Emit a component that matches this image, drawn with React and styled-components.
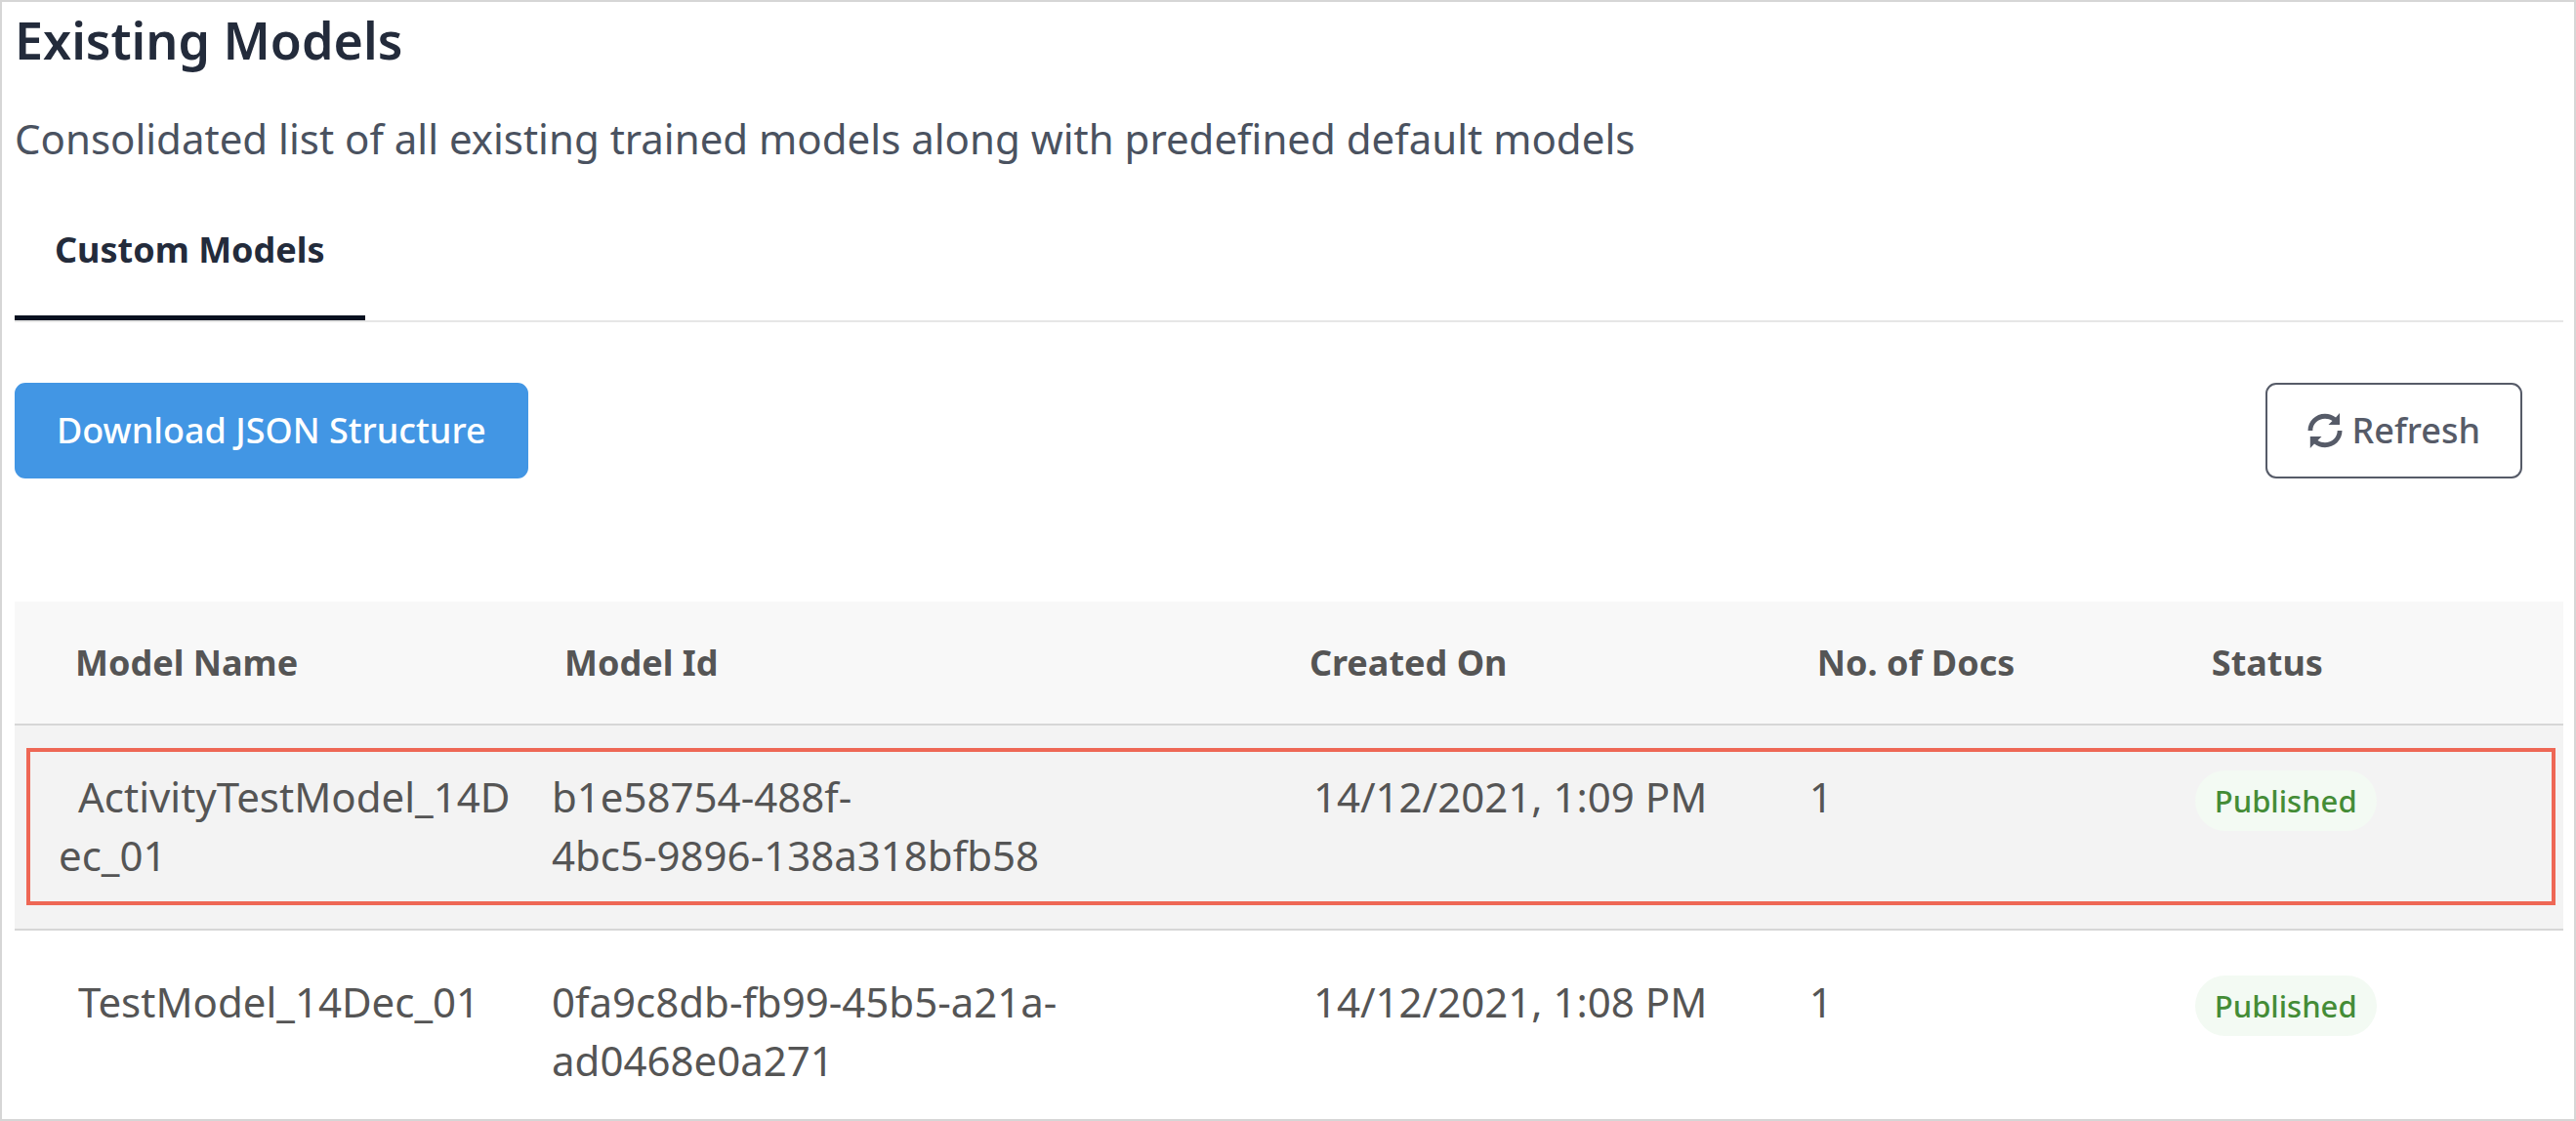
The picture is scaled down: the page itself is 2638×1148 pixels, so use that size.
import React from "react";
import styled, { createGlobalStyle } from "styled-components";

const GlobalStyle = createGlobalStyle`
  *, *::before, *::after { box-sizing: border-box; }
  body { margin: 0; background: #ffffff; font-family: "Noto Sans", sans-serif; }
`;

const Page = styled.main`
  min-height: 100vh;
  border: 2px solid #d6d6d6;
  padding: 4px 11px 0 13px;
`;

const Title = styled.h1`
  margin: 0 0 36px;
  font-size: 52px;
  line-height: 70px;
  font-weight: 600;
  color: #232b3b;
`;

const Subtitle = styled.p`
  margin: 0 0 16px;
  font-size: 42px;
  line-height: 60px;
  color: #4a5260;
`;

const TabList = styled.div`
  display: flex;
  border-bottom: 2px solid #e6e6e6;
`;

const Tab = styled.button`
  border: 0;
  border-bottom: 5px solid #081120;
  background: transparent;
  padding: 43px 41px 42px;
  font: inherit;
  font-size: 36px;
  line-height: 50px;
  font-weight: 700;
  color: #232b3b;
`;

const Toolbar = styled.div`
  display: flex;
  justify-content: space-between;
  padding: 62px 42px 126px 0;
`;

const Button = styled.button`
  display: flex;
  align-items: center;
  gap: 9px;
  border: 2px solid ${(p) => (p.$primary ? "#4296e4" : "#565b68")};
  border-radius: 11px;
  background: ${(p) => (p.$primary ? "#4296e4" : "#ffffff")};
  color: ${(p) => (p.$primary ? "#ffffff" : "#565b68")};
  padding: 22px 41px;
  font: inherit;
  font-size: 36px;
  line-height: 50px;
  font-weight: 500;
`;

const Table = styled.table`
  width: 100%;
  table-layout: fixed;
  border-collapse: separate;
  border-spacing: 0;
  color: #555555;
`;

const Col = styled.col`
  width: ${(p) => p.$width};
`;

const HeadCell = styled.th`
  padding: 38px 0 37px ${(p) => p.$inset}px;
  border-bottom: 2px solid #d6d6d6;
  background: #f8f8f8;
  font-size: 36px;
  line-height: 50px;
  font-weight: 700;
  text-align: left;
`;

const Row = styled.tr`
  position: relative;
  background: ${(p) => (p.$selected ? "#f3f3f3" : "#ffffff")};
  &:last-child > td { padding-bottom: 24px; border-bottom: 0; }
  ${(p) => p.$selected && `
    &::after {
      content: "";
      position: absolute;
      inset: 23px 8px 26px 12px;
      border: 4px solid #ee6755;
      pointer-events: none;
    }
  `}
`;

const Cell = styled.td`
  padding: 43px 0 45px ${(p) => p.$inset}px;
  border-bottom: 2px solid #d6d6d6;
  font-size: 42px;
  line-height: 60px;
  vertical-align: top;
`;

const NameCell = styled(Cell)`
  text-indent: 20px;
  word-break: break-all;
`;

const IdPart = styled.span`
  white-space: nowrap;
`;

const Badge = styled.span`
  display: block;
  width: fit-content;
  margin-top: 3px;
  border-radius: 31px;
  background: #f3faf3;
  color: #448c36;
  padding: 0 20px;
  font-size: 31px;
  line-height: 62px;
  font-weight: 500;
`;

const columns = [
  { label: "Model Name", width: "19.54%", head: 62, body: 45 },
  { label: "Model Id", width: "29.23%", head: 53, body: 40 },
  { label: "Created On", width: "19.92%", head: 53, body: 57 },
  { label: "No. of Docs", width: "15.48%", head: 53, body: 45 },
  { label: "Status", width: "15.83%", head: 53, body: 36 },
];

const models = [
  { name: "ActivityTestModel_14Dec_01", id: "b1e58754-488f-4bc5-9896-138a318bfb58", created: "14/12/2021, 1:09 PM", docs: 1, status: "Published" },
  { name: "TestModel_14Dec_01", id: "0fa9c8db-fb99-45b5-a21a-ad0468e0a271", created: "14/12/2021, 1:08 PM", docs: 1, status: "Published" },
];

// An id may only wrap after a group that ends in a letter.
const idParts = (id) => id.split(/(?<=[a-z]-)/);

function RefreshIcon() {
  return (
    <svg width="36" height="36" viewBox="0 0 36 36" aria-hidden="true" fill="currentColor">
      <path d="M0.500 18C0.500 8.500 8.300 0.800 18 0.800c4.200 0 8 1.400 11 3.800L33 0V12H21.500l4-4C23.300 6.500 20.800 5.800 18 5.800 11 5.800 5.300 11 5.300 18Z" />
      <path d="M35.500 18C35.500 27.500 27.700 35.200 18 35.200c-4.200 0-8-1.400-11-3.800L2.800 36V24H14.500l-4 4C12.700 29.500 15.200 30.200 18 30.200 25 30.200 30.700 25 30.700 18Z" />
    </svg>
  );
}

export default function App() {
  const [name, id, created, docs, status] = columns;
  return (
    <>
      <GlobalStyle />
      <Page>
        <Title>Existing Models</Title>
        <Subtitle>Consolidated list of all existing trained models along with predefined default models</Subtitle>
        <TabList role="tablist">
          <Tab type="button" role="tab" aria-selected="true">Custom Models</Tab>
        </TabList>
        <Toolbar>
          <Button type="button" $primary>Download JSON Structure</Button>
          <Button type="button"><RefreshIcon />Refresh</Button>
        </Toolbar>
        <Table>
          <colgroup>
            {columns.map((c) => <Col key={c.label} $width={c.width} />)}
          </colgroup>
          <thead>
            <tr>
              {columns.map((c) => <HeadCell key={c.label} scope="col" $inset={c.head}>{c.label}</HeadCell>)}
            </tr>
          </thead>
          <tbody>
            {models.map((m, i) => (
              <Row key={m.id} $selected={i === 0}>
                <NameCell $inset={name.body}>{m.name}</NameCell>
                <Cell $inset={id.body}>
                  {idParts(m.id).map((part) => <React.Fragment key={part}><IdPart>{part}</IdPart><wbr /></React.Fragment>)}
                </Cell>
                <Cell $inset={created.body}>{m.created}</Cell>
                <Cell $inset={docs.body}>{m.docs}</Cell>
                <Cell $inset={status.body}><Badge>{m.status}</Badge></Cell>
              </Row>
            ))}
          </tbody>
        </Table>
      </Page>
    </>
  );
}
